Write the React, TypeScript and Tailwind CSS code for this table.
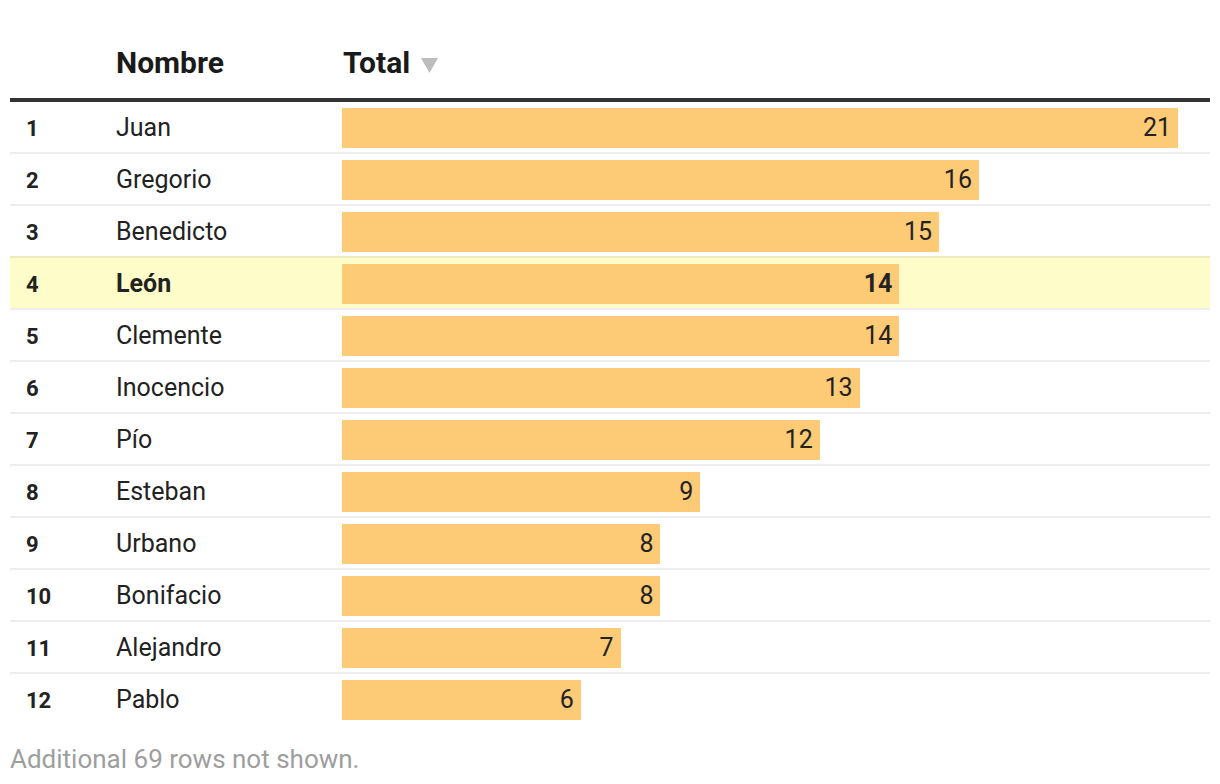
const rows = [
  { name: "Juan", total: 21 },
  { name: "Gregorio", total: 16 },
  { name: "Benedicto", total: 15 },
  { name: "León", total: 14, highlight: true },
  { name: "Clemente", total: 14 },
  { name: "Inocencio", total: 13 },
  { name: "Pío", total: 12 },
  { name: "Esteban", total: 9 },
  { name: "Urbano", total: 8 },
  { name: "Bonifacio", total: 8 },
  { name: "Alejandro", total: 7 },
  { name: "Pablo", total: 6 },
];

const max = 21;

export default function App() {
  return (
    <div className="min-h-screen bg-white px-[10px] font-['Roboto',sans-serif] text-[#222]">
      <div className="flex h-[98px] items-end pb-[17px] text-[30px] font-bold leading-[36px] text-[#1a1a1a]">
        <div className="w-[106px]" />
        <div className="w-[226px]">Nombre</div>
        <div className="flex items-center gap-[11px] pl-px">
          Total
          <svg width="17" height="16" viewBox="0 0 17 16" className="mt-[3px]">
            <path d="M0 1h17L8.5 16z" fill="#bdbdbd" />
          </svg>
        </div>
      </div>
      <div className="h-[4px] bg-[#333]" />
      {rows.map((r, i) => (
        <div
          key={r.name}
          className={`flex pt-[6px] pb-[4px] ${i > 0 ? "border-t-2 border-black/[0.065]" : ""} ${r.highlight ? "bg-[#fefcc9] font-bold" : ""}`}
        >
          <div className="flex h-[40px] w-[106px] items-center pl-[16px] text-[22px] font-bold">
            {i + 1}
          </div>
          <div className="flex h-[40px] w-[226px] items-center text-[25px]">{r.name}</div>
          <div className="flex-1">
            <div
              className="flex h-[40px] items-center justify-end bg-[#fdca76] pr-[7px] text-[25px]"
              style={{ width: `${(r.total / max) * 836}px` }}
            >
              {r.total}
            </div>
          </div>
        </div>
      ))}
      <div className="mt-[20px] text-[26px] leading-[30px] text-[#9e9e9e]">
        Additional 69 rows not shown.
      </div>
    </div>
  );
}
